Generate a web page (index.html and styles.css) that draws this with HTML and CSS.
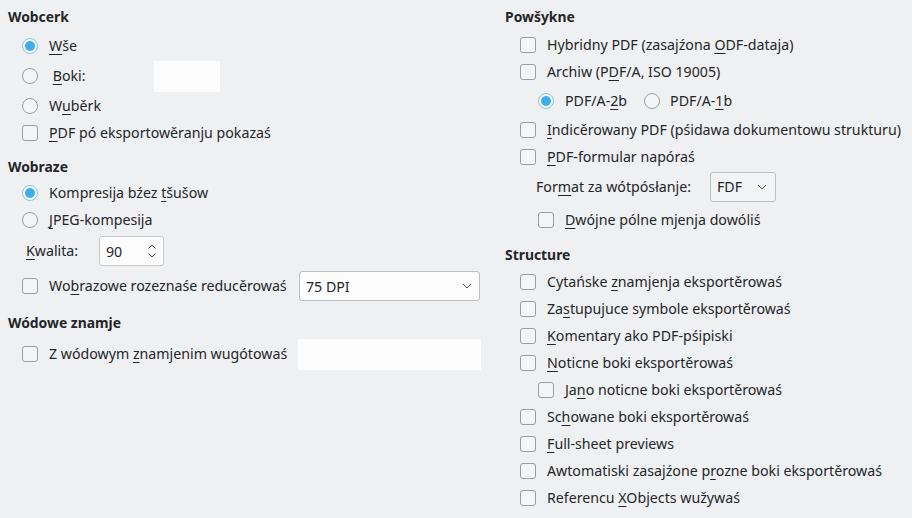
FILE: index.html
```html
<!DOCTYPE html>
<html>
<head>
<meta charset="utf-8">
<link rel="stylesheet" href="styles.css">
</head>
<body>
<div class="page">
  <div class="col left">
    <div class="heading">Wobcerk</div>
    <div class="row r31 ind mt4"><span class="radio on"></span><span class="lbl"><u>W</u>še</span></div>
    <div class="row r30 ind"><span class="radio"></span><span class="lbl boki">&nbsp;<u>B</u>oki:</span><span class="pagebox"></span></div>
    <div class="row r30 ind"><span class="radio"></span><span class="lbl">W<u>u</u>běrk</span></div>
    <div class="row r24 ind"><span class="check"></span><span class="lbl"><u>P</u>DF pó eksportowěranju pokazaś</span></div>

    <div class="heading h2">Wobraze</div>
    <div class="row r26 ind mt4"><span class="radio on"></span><span class="lbl">Kompresija bźez <u>t</u>šušow</span></div>
    <div class="row r27 ind"><span class="radio"></span><span class="lbl"><u>J</u>PEG-kompesija</span></div>
    <div class="row r30 kw mt3"><span class="lbl kwl"><u>K</u>walita:</span><span class="spin"><span class="spinval">90</span><svg class="spinarr" width="10" height="16" viewBox="0 0 10 16"><path d="M1.5 5.5 L5 2 L8.5 5.5 M1.5 10.5 L5 14 L8.5 10.5" fill="none" stroke="#4d4f52" stroke-width="1"/></svg></span></div>
    <div class="row r30 ind mt5"><span class="check"></span><span class="lbl wl1">Wo<u>b</u>razowe rozeznaśe reducěrowaś</span><span class="combo dpi"><span>75 DPI</span><svg width="10" height="6" viewBox="0 0 10 6"><path d="M1 1 L5 5 L9 1" fill="none" stroke="#4d4f52" stroke-width="1"/></svg></span></div>

    <div class="heading h3">Wódowe znamje</div>
    <div class="row r30 ind mt7"><span class="check"></span><span class="lbl wl2">Z wódowym <u>z</u>namjenim wugótowaś</span><span class="wmbox"></span></div>
  </div>

  <div class="col right">
    <div class="heading">Powšykne</div>
    <div class="row r27 ind mt5"><span class="check"></span><span class="lbl">Hybridny PDF (zasajźona <u>O</u>DF-dataja)</span></div>
    <div class="row r27 ind"><span class="check"></span><span class="lbl">Archiw (P<u>D</u>F/A, ISO 19005)</span></div>
    <div class="row r31 ind2"><span class="radio on"></span><span class="lbl">PDF/A-<u>2</u>b</span><span class="radio r2"></span><span class="lbl">PDF/A-<u>1</u>b</span></div>
    <div class="row r27 ind"><span class="check"></span><span class="lbl"><u>I</u>ndicěrowany PDF (pśidawa dokumentowu strukturu)</span></div>
    <div class="row r27 ind"><span class="check"></span><span class="lbl"><u>P</u>DF-formular napóraś</span></div>
    <div class="row r31 fmt mt1"><span class="lbl fmtl">For<u>m</u>at za wótpósłanje:</span><span class="combo fdf"><span>FDF</span><svg width="10" height="6" viewBox="0 0 10 6"><path d="M1 1 L5 5 L9 1" fill="none" stroke="#4d4f52" stroke-width="1"/></svg></span></div>
    <div class="row r27 ind2 mt4"><span class="check"></span><span class="lbl"><u>D</u>wójne pólne mjenja dowóliś</span></div>

    <div class="heading h4">Structure</div>
    <div class="row r27 ind mt4"><span class="check"></span><span class="lbl">Cytańske <u>z</u>namjenja eksportěrowaś</span></div>
    <div class="row r27 ind"><span class="check"></span><span class="lbl">Za<u>s</u>tupujuce symbole eksportěrowaś</span></div>
    <div class="row r27 ind"><span class="check"></span><span class="lbl"><u>K</u>omentary ako PDF-pśipiski</span></div>
    <div class="row r27 ind"><span class="check"></span><span class="lbl"><u>N</u>oticne boki eksportěrowaś</span></div>
    <div class="row r27 ind2"><span class="check"></span><span class="lbl">Ja<u>n</u>o noticne boki eksportěrowaś</span></div>
    <div class="row r27 ind"><span class="check"></span><span class="lbl">Sc<u>h</u>owane boki eksportěrowaś</span></div>
    <div class="row r27 ind"><span class="check"></span><span class="lbl"><u>F</u>ull-sheet previews</span></div>
    <div class="row r27 ind"><span class="check"></span><span class="lbl">Awtomatiski zasajźone p<u>r</u>ozne boki eksportěrowaś</span></div>
    <div class="row r27 ind"><span class="check"></span><span class="lbl">Referencu <u>X</u>Objects wužywaś</span></div>
  </div>
</div>
</body>
</html>
```

FILE: styles.css
```css
html, body {
  margin: 0;
  padding: 0;
  background: #eff0f1;
}
body {
  font-family: "Noto Sans", "DejaVu Sans", sans-serif;
  font-size: 14.2px;
  color: #232629;
  width: 912px;
  height: 518px;
  overflow: hidden;
}
.page {
  display: grid;
  grid-template-columns: 497px 407px;
  padding-left: 8px;
  padding-top: 8px;
}
.col {
  display: flex;
  flex-direction: column;
}
.heading {
  font-weight: bold;
  font-size: 13.9px;
  height: 18px;
  line-height: 18px;
}
.h2 { margin-top: 13px; }
.h3 { margin-top: 13px; }
.h4 { margin-top: 13px; }
.row {
  display: flex;
  align-items: center;
  white-space: nowrap;
}
.r24 { height: 24px; }
.r26 { height: 26px; }
.r27 { height: 27px; }
.r30 { height: 30px; }
.r31 { height: 31px; }
.mt1 { margin-top: 1px; }
.mt3 { margin-top: 3px; }
.mt4 { margin-top: 4px; }
.mt5 { margin-top: 5px; }
.mt7 { margin-top: 7px; }
.ind { padding-left: 14px; }
.right .ind { padding-left: 15px; }
.ind2 { padding-left: 33px; }
.kw { padding-left: 18px; }
.fmt { padding-left: 31px; }
u {
  text-decoration: underline;
  text-underline-offset: 3px;
  text-decoration-thickness: 1px;
  text-decoration-color: #232629;
}

.check, .radio {
  flex: none;
  width: 16px;
  height: 16px;
  box-sizing: border-box;
  border: 1px solid #9a9c9f;
  background: #f4f5f5;
  margin-right: 11px;
}
.check { border-radius: 3px; }
.radio {
  border-radius: 50%;
  position: relative;
}
.radio.on {
  border-color: #7fc7ee;
  background: #fcfcfc;
}
.radio.on::after {
  content: "";
  position: absolute;
  left: 2px;
  top: 2px;
  width: 10px;
  height: 10px;
  border-radius: 50%;
  background: #3daee9;
}
.radio.r2 { margin-left: 17px; margin-right: 10px; }
.lbl { line-height: 18px; }
.boki { width: 105px; }
.pagebox {
  width: 66px;
  height: 31px;
  background: #fcfcfc;
}
.kwl { width: 73px; }
.spin {
  box-sizing: border-box;
  width: 65px;
  height: 30px;
  border: 1px solid #c8cacc;
  border-radius: 3px;
  background: #fcfcfc;
  display: flex;
  align-items: center;
  justify-content: space-between;
  padding: 0 6px 0 6px;
}
.combo {
  box-sizing: border-box;
  height: 30px;
  border: 1px solid #bcbec0;
  border-radius: 3px;
  background: #fcfcfc;
  display: flex;
  align-items: center;
  justify-content: space-between;
  padding: 0 7px 0 6px;
}
.wl1 { width: 250px; }
.wl2 { width: 249px; }
.dpi {
  width: 181px;
}
.fmtl { width: 174px; }
.fdf {
  width: 66px;
  background: #f3f4f5;
  padding-right: 8px;
}
.wmbox {
  width: 183px;
  height: 31px;
  background: #fcfcfc;
}
```
